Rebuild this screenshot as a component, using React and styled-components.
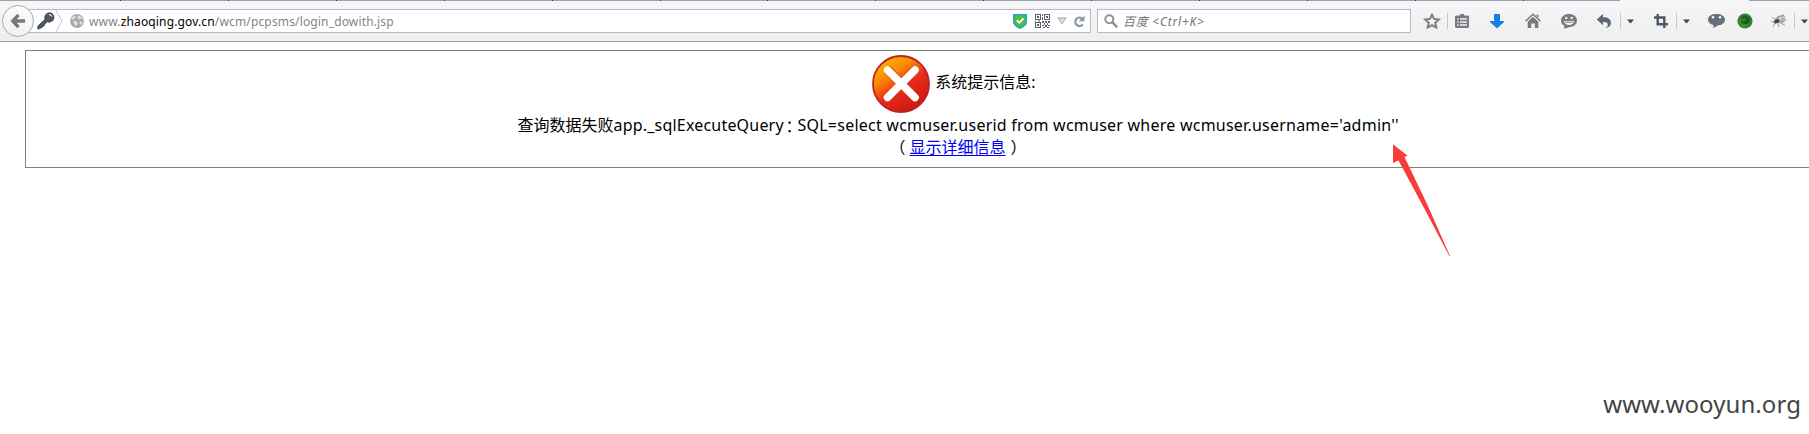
import React from "react";
import styled, { createGlobalStyle } from "styled-components";

const Global = createGlobalStyle`
  body { margin: 0; background: #fff; overflow: hidden; }
  * { box-sizing: border-box; }
  svg { display: block; flex: none; }
`;
const latin = `"Noto Sans", "Noto Sans CJK SC", sans-serif`;

const Page = styled.div`
  position: relative;
  width: 1809px;
  height: 434px;
  overflow: hidden;
  font-family: ${latin};
`;
const Chrome = styled.header`
  height: 42px;
  background: linear-gradient(#f6f5f7, #efefef);
  border-bottom: 1px solid #999;
  display: flex;
  flex-direction: column;
`;
const TabStrip = styled.div`
  display: flex;
  height: 1px;
  background: linear-gradient(90deg, #9ba3b2 1620px, #f6f5f7 1620px 1749px, #9ba3b2 1749px);
`;
const TabEdge = styled.i`
  width: 107.92px;
  height: 1px;
  border-right: 1px solid #30343d;
  &:first-child { width: 121px; }
`;
const Toolbar = styled.div`
  display: flex;
  align-items: center;
  height: 40px;
`;
const BackButton = styled.div`
  width: 32px;
  height: 32px;
  margin-left: 2px;
  border: 1px solid #a9abad;
  border-radius: 50%;
  background: linear-gradient(#fcfcfc, #f1f1f1);
  display: flex;
  align-items: center;
  justify-content: center;
  z-index: 1;
`;
const Field = styled.div`
  width: ${(p) => p.$w}px;
  height: 24px;
  margin-left: ${(p) => p.$ml}px;
  padding-left: ${(p) => p.$pl}px;
  background: #fff;
  border: 1px solid #b3bbc8;
  display: flex;
  align-items: center;
`;
const Address = styled.span`
  font-size: 12px;
  line-height: 22px;
  white-space: pre;
  color: #858585;
  margin: 1px 0 0 5px;
  letter-spacing: ${(p) => p.$ls || 0}px;
  b { font-weight: 400; color: #000; }
`;
const Hint = styled(Address)`
  font-style: italic;
  color: #757575;
`;
const FieldIcons = styled.div`
  display: flex;
  align-items: center;
  margin-left: auto;
  padding-right: 5px;
`;
const Slot = styled.span`
  flex: none;
  width: ${(p) => p.$w}px;
  margin-left: ${(p) => p.$ml}px;
`;
const Divider = styled.span`
  flex: none;
  width: 1px;
  height: 16px;
  margin-left: ${(p) => p.$ml}px;
  background: #c3c8cf;
`;
const Notice = styled.main`
  width: 1865px;
  height: 118px;
  margin: 8px 0 0 25px;
  border: 1px solid #808080;
  display: flex;
  flex-direction: column;
  align-items: center;
  color: #000;
  font-size: 16px;
`;
const Line = styled.div`
  display: flex;
  align-items: center;
  height: ${(p) => p.$h}px;
  margin-top: ${(p) => p.$mt || 0}px;
  padding-right: ${(p) => p.$pr || 0}px;
  white-space: pre;
  line-height: 22px;
`;
const Title = styled.span`
  margin: -5px 0 0 5px;
`;
const Run = styled.span`
  width: ${(p) => p.$w}px;
  letter-spacing: ${(p) => p.$ls || 0}px;
`;
const Colon = styled.span`
  width: 12px;
  margin-left: 5px;
  font-family: "Noto Sans CJK SC", sans-serif;
  font-feature-settings: "halt";
`;
const Paren = styled.span`
  margin: ${(p) => (p.$open ? "0 4px 0 -4px" : "0 -5px 0 5px")};
`;
const Link = styled.a`
  color: #0000ee;
  text-decoration: underline;
  text-underline-offset: 2px;
`;
const Arrow = styled.svg`
  position: absolute;
  left: 1390px;
  top: 142px;
`;
const Watermark = styled.div`
  position: absolute;
  right: 8px;
  bottom: 12px;
  font-size: 24px;
  line-height: 36px;
  color: #444;
  letter-spacing: ${(p) => p.$ls}px;
`;

const Caret = () => (
  <svg width="7" height="5" viewBox="0 0 7 5"><path d="M0 .5h7L3.5 4.5z" fill="#444" /></svg>
);
const Back = () => (
  <svg width="16" height="16" viewBox="0 0 16 16" fill="none" stroke="#737780" strokeWidth="3.4">
    <path d="M8.5 1.8 2.8 8l5.7 6.2M3 8h12" />
  </svg>
);
const Key = () => (
  <svg width="18" height="18" viewBox="0 0 18 18">
    <path d="M8.8 2.6C10.500.4 14 .2 15.800 2.200s1.500 5.600-.9 7.100c-1.500 1-3.500 1-4.700.500L7.600 12.500l-.3 1.500-1.800.2-.4 1.500-1.500.3-.9.800H.7v-2.500L8 7.300c-.500-1.700-.3-3.300.8-4.700z" fill="#4b5762" stroke="#2f3942" strokeWidth=".7" />
    <path d="M11.500 2.300c1.500-.8 3.800.9 3.700 2.700z" fill="#fff" />
  </svg>
);
const Globe = () => (
  <svg width="14" height="14" viewBox="0 0 14 14">
    <circle cx="7" cy="7" r="6.900" fill="#a8a8a8" />
    <path d="M1 5 3.500 2l2.500.3-.5 1.500L4 5l-2 .8zM7.500 1.200l3.500 1.300 1.700 3-1.700-.8-1.500.8L7.500 4zM3 7.500l3-.5 2 1.500-.8 2L6 12.500 4.500 10.800zM9.500 7.200l2 .3 1 1-1.500 2.500-1.300-1.300z" fill="#dedede" />
  </svg>
);
const Shield = () => (
  <svg width="14" height="15" viewBox="0 0 14 15">
    <path d="M0 0h14v8c0 3-3.500 5.500-7 7-3.500-1.500-7-4-7-7z" fill="#29a5c9" />
    <path d="M1.500 1.500h11V8c0 2.200-2.500 4-5.500 5.300C4 12 1.500 10.200 1.500 8z" fill="#50bd3b" />
    <path d="m3.800 6.200 2.500 2.500L10.500 4.500" fill="none" stroke="#fff" strokeWidth="2" />
  </svg>
);
const Qr = () => (
  <svg width="15" height="14" viewBox="0 0 15 14" fill="#5c6470">
    <path fillRule="evenodd" d="M0 0h6v6H0zM1 1v4h4V1zM9 0h6v6H9zm1 1v4h4V1zM0 8h6v6H0zm1 1v4h4V9z" />
    <path d="M2 2h2v2H2zM11 2h2v2h-2zM2 10h2v2H2zM7 0h1v2H7zM7 3h1v3H7zM0 6.500h1v1H0zM3 6.500h2v1H3zM7 7h2v2H7zM10 7h2v2h-2zM13 7h2v2h-2zM9 9h1v2H9zM12 9h1v2h-1zM7 11h2v1H7zM10 11h2v2h-2zM13 11h2v1h-2zM8 13h2v1H8zM12 13h2v1h-2z" />
  </svg>
);
const Drop = () => (
  <svg width="10" height="8" viewBox="0 0 10 8"><path d="M.8.8h8.400L5 7z" fill="#d9dde2" stroke="#aeb4bc" /></svg>
);
const Reload = () => (
  <svg width="12" height="13" viewBox="0 0 12 13">
    <path d="M8.800 3.300A4.200 4.200 0 1 0 9.800 9.500" fill="none" stroke="#8a95a3" strokeWidth="2.200" />
    <path d="M11.500.5v5.800H5.800z" fill="#8a95a3" />
  </svg>
);
const Magnifier = () => (
  <svg width="14" height="14" viewBox="0 0 14 14" fill="none" stroke="#929292" strokeWidth="2">
    <circle cx="5.300" cy="5.300" r="4" /><path d="m8.200 8.200 5 5" strokeWidth="2.600" />
  </svg>
);
const Star = () => (
  <svg width="22" height="16" viewBox="0 0 22 16">
    <path d="m11 1.600 2 4.300 4.900.6-3.600 3.300 1 4.700L11 12.200l-4.300 2.300 1-4.700L4.100 6.500 9 5.900z" fill="none" stroke="#777b81" strokeWidth="1.900" />
  </svg>
);
const Clipboard = () => (
  <svg width="16" height="16" viewBox="0 0 16 16">
    <path fillRule="evenodd" d="M6 1h4v1.500h4.500l.5 1V14l-1 1H2l-1-1V3.500l1-1h4zM3.200 5.300v1.400h1.500V5.300zm2.800 0v1.400h7V5.300zM3.200 8.300v1.400h1.500V8.300zm2.800 0v1.400h7V8.300zM3.200 11.300v1.400h1.500v-1.400zm2.800 0v1.400h7v-1.400z" fill="#777b81" />
  </svg>
);
const Download = () => (
  <svg width="16" height="16" viewBox="0 0 16 16"><path d="M5 1h6v7h4v1l-7 6.500L1 9V8h4z" fill="#177ee6" /></svg>
);
const Home = () => (
  <svg width="18" height="16" viewBox="0 0 18 16">
    <path d="m1.500 8.300 7.500-7 7.500 7" fill="none" stroke="#777b81" strokeWidth="1.500" />
    <path d="m9 3.800 5.300 5V15h-3.500v-4.500H7.300V15H3.700V8.800zM12.600 1.500h1.800V5l-1.800-1.700z" fill="#777b81" />
  </svg>
);
const Smile = () => (
  <svg width="16" height="16" viewBox="0 0 16 16">
    <path d="M8 1c4.400 0 8 2.500 8 6.500S12.500 14 8.500 14c-1.500 1-4 1.600-6 1.300.9-.8 1-1.600.6-2.600C1.200 11.500 0 9.800 0 7.500 0 3.500 3.600 1 8 1z" fill="#777b81" />
    <path d="M3 8h10c-.3 2.500-2.300 4-5 4S3.300 10.500 3 8z" fill="#f3f3f3" /><path d="M4.500 9.200h7" stroke="#777b81" />
    <circle cx="5.300" cy="5" r="1.200" fill="#f3f3f3" /><circle cx="10.700" cy="5" r="1.200" fill="#f3f3f3" />
  </svg>
);
const Undo = () => (
  <svg width="16" height="16" viewBox="0 0 16 16">
    <path d="M7 1v3.300c5 0 8 2 8 5.500 0 3-2.300 5.200-5.800 5.200 2.100-1 3-2.400 2.500-4C11.200 9.500 9.500 9 7 9v3.200L.8 6.600z" fill="#5c6874" />
  </svg>
);
const Crop = () => (
  <svg width="14" height="14" viewBox="0 0 14 14" fill="none" stroke="#4c5864" strokeWidth="2.400">
    <path d="M3.700 0v10.200H14M0 3.500h10.300V14" />
  </svg>
);
const Bubble = () => (
  <svg width="17" height="16" viewBox="0 0 17 16">
    <path d="M8.500 1C13 1 17 3 17 6.800c0 3.500-3.500 5.500-7.500 5.600-1.300 1.400-3 2-5 2.100.9-.8 1.200-1.600.8-2.600C2.200 11.200 0 9.500 0 6.800 0 3 4 1 8.500 1z" fill="#64717d" />
    <circle cx="5" cy="4.300" r="1.200" fill="#fff" /><circle cx="12" cy="4.300" r="1.200" fill="#fff" />
  </svg>
);
const Orb = () => (
  <svg width="16" height="16" viewBox="0 0 16 16">
    <circle cx="8" cy="8" r="7.600" fill="#318432" />
    <path d="M4.500 3.500c3-2 7-.8 8.300 2.500.5 3.200-1.800 5.400-4.800 5C5.500 10.800 4 9.300 4 7.500l2 1.200 3.500-1.500L8.500 5l-4 1z" fill="#1c5a22" />
    <path d="M2.500 7c0 4 3 6.500 6.500 6.300" fill="none" stroke="#44993f" />
  </svg>
);
const Fly = () => (
  <svg width="16" height="14" viewBox="0 0 16 14">
    <ellipse cx="9" cy="4.500" rx="5" ry="2.200" transform="rotate(-25 9 5)" fill="#d0d0d0" stroke="#777" strokeWidth=".6" />
    <ellipse cx="10.500" cy="7.500" rx="4" ry="1.600" transform="rotate(-12 10 8)" fill="#aaa" />
    <ellipse cx="5.500" cy="7.500" rx="2.800" ry="1.900" transform="rotate(-25 5 7)" fill="#444" />
    <path d="M4 5 1 3.500M3 8 0 7.500M4 9l-2 4M7 9l1 4M10 9l4 2.500M7 5V2M10 3l3-2.500M13 5l2 .5" fill="none" stroke="#777" strokeWidth=".7" />
  </svg>
);
const ErrorIcon = () => (
  <svg width="58" height="58" viewBox="0 0 58 58">
    <defs>
      <linearGradient id="ball" x1=".15" y1=".05" x2=".75" y2=".95">
        <stop offset="0" stopColor="#ffb400" /><stop offset=".3" stopColor="#fb8a06" />
        <stop offset=".58" stopColor="#ec2a1c" /><stop offset="1" stopColor="#c91812" />
      </linearGradient>
    </defs>
    <circle cx="29" cy="29" r="28" fill="url(#ball)" stroke="#bd2320" strokeWidth="1.800" />
    <path d="m16.500 15.500 26 27M42.500 15.500l-26 27" stroke="#c93a12" strokeWidth="9.500" strokeLinecap="round" opacity=".6" />
    <path d="m15.500 15 27.500 27.500M43 15 15.500 42.500" stroke="#fff" strokeWidth="7.600" strokeLinecap="round" />
  </svg>
);

const tools = [
  [Star, 22, 10], [null, 1, 4], [Clipboard, 16, 6], [Download, 16, 19], [Home, 18, 19],
  [Smile, 16, 19], [Undo, 16, 19], [null, 1, 8], [Caret, 7, 6], [Crop, 14, 20],
  [null, 1, 8], [Caret, 7, 6], [Bubble, 17, 18], [Orb, 16, 12], [Fly, 16, 18],
  [null, 1, 7], [Caret, 7, 6],
];

export default function App() {
  return (
    <Page>
      <Global />
      <Chrome>
        <TabStrip>{Array.from({ length: 14 }, (_, i) => <TabEdge key={i} />)}</TabStrip>
        <Toolbar>
          <BackButton><Back /></BackButton>
          <Field $w={1063} $ml={-6} $pl={8}>
            <Key />
            <svg width="8" height="22" viewBox="0 0 8 22"><path d="M.8 0 7 11 .8 22" fill="none" stroke="#bfc4cb" /></svg>
            <Slot $w={14} $ml={7}><Globe /></Slot>
            <Address $ls={0.15}>www.<b>zhaoqing.gov.cn</b>/wcm/pcpsms/login_dowith.jsp</Address>
            <FieldIcons>
              <Shield />
              <Slot $w={15} $ml={8}><Qr /></Slot>
              <Slot $w={10} $ml={7}><Drop /></Slot>
              <Slot $w={12} $ml={6}><Reload /></Slot>
            </FieldIcons>
          </Field>
          <Field $w={314} $ml={6} $pl={6}>
            <Magnifier />
            <Hint $ls={0.75}>百度 &lt;Ctrl+K&gt;</Hint>
          </Field>
          {tools.map(([Icon, w, ml], i) =>
            Icon ? <Slot key={i} $w={w} $ml={ml}><Icon /></Slot> : <Divider key={i} $ml={ml} />
          )}
        </Toolbar>
      </Chrome>
      <Notice>
        <Line $h={58} $mt={4} $pr={7}><ErrorIcon /><Title>系统提示信息:</Title></Line>
        <Line $h={23}>
          <Run $w={96}>查询数据失败</Run>
          <Run $w={167} $ls={0.2}>app._sqlExecuteQuery</Run>
          <Colon>：</Colon>
          <Run $w={600} $ls={0.235}>SQL=select wcmuser.userid from wcmuser where wcmuser.username='admin''</Run>
        </Line>
        <Line $h={22}><Paren $open>（</Paren><Link>显示详细信息</Link><Paren>）</Paren></Line>
      </Notice>
      <Arrow width="62" height="116" viewBox="0 0 62 116">
        <path d="M3 2.300 17.500 13.800 14.500 15 37.500 63 60 114 59.300 114 33 64 8.500 18.500 3 21z" fill="#fb3a3a" />
      </Arrow>
      <Watermark $ls={0.07}>www.wooyun.org</Watermark>
    </Page>
  );
}
